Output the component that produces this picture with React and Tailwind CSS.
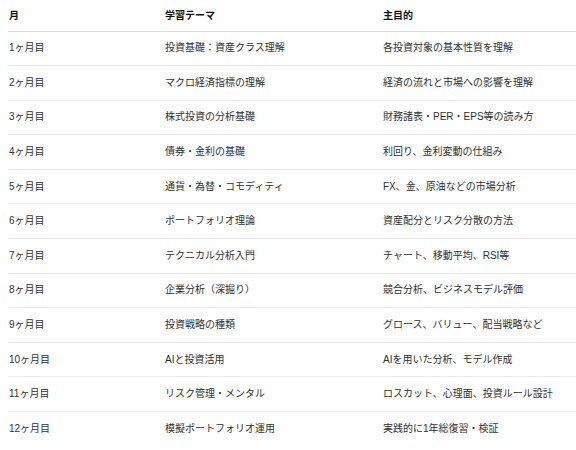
import React from "react";

const rows = [
  ["1ヶ月目", "投資基礎：資産クラス理解", "各投資対象の基本性質を理解"],
  ["2ヶ月目", "マクロ経済指標の理解", "経済の流れと市場への影響を理解"],
  ["3ヶ月目", "株式投資の分析基礎", "財務諸表・PER・EPS等の読み方"],
  ["4ヶ月目", "債券・金利の基礎", "利回り、金利変動の仕組み"],
  ["5ヶ月目", "通貨・為替・コモディティ", "FX、金、原油などの市場分析"],
  ["6ヶ月目", "ポートフォリオ理論", "資産配分とリスク分散の方法"],
  ["7ヶ月目", "テクニカル分析入門", "チャート、移動平均、RSI等"],
  ["8ヶ月目", "企業分析（深掘り）", "競合分析、ビジネスモデル評価"],
  ["9ヶ月目", "投資戦略の種類", "グロース、バリュー、配当戦略など"],
  ["10ヶ月目", "AIと投資活用", "AIを用いた分析、モデル作成"],
  ["11ヶ月目", "リスク管理・メンタル", "ロスカット、心理面、投資ルール設計"],
  ["12ヶ月目", "模擬ポートフォリオ運用", "実践的に1年総復習・検証"],
];

export default function App() {
  return (
    <div
      className="w-[576px] h-[450px] overflow-hidden bg-white pl-[8px]"
      style={{ fontFamily: '"Liberation Sans", "Noto Sans CJK JP", sans-serif' }}
    >
      <table className="w-[568px] border-collapse text-[10px] leading-[14px] text-[#303030] table-fixed">
        <colgroup>
          <col className="w-[157px]" />
          <col className="w-[218px]" />
          <col />
        </colgroup>
        <thead>
          <tr className="h-[31px] border-b border-[#dcdcdc]">
            <th className="pl-[1px] pt-[1px] text-left font-semibold text-[#111]">月</th>
            <th className="pt-[1px] text-left font-semibold text-[#111]">学習テーマ</th>
            <th className="pt-[1px] text-left font-semibold text-[#111]">主目的</th>
          </tr>
        </thead>
        <tbody>
          {rows.map((r, i) => (
            <tr
              key={i}
              className={
                i === rows.length - 1
                  ? "h-[34.6px]"
                  : "h-[34.6px] border-b border-[#ececec]"
              }
            >
              <td className="pl-[1px] whitespace-nowrap">{r[0]}</td>
              <td className="whitespace-nowrap">{r[1]}</td>
              <td className="whitespace-nowrap">{r[2]}</td>
            </tr>
          ))}
        </tbody>
      </table>
    </div>
  );
}
